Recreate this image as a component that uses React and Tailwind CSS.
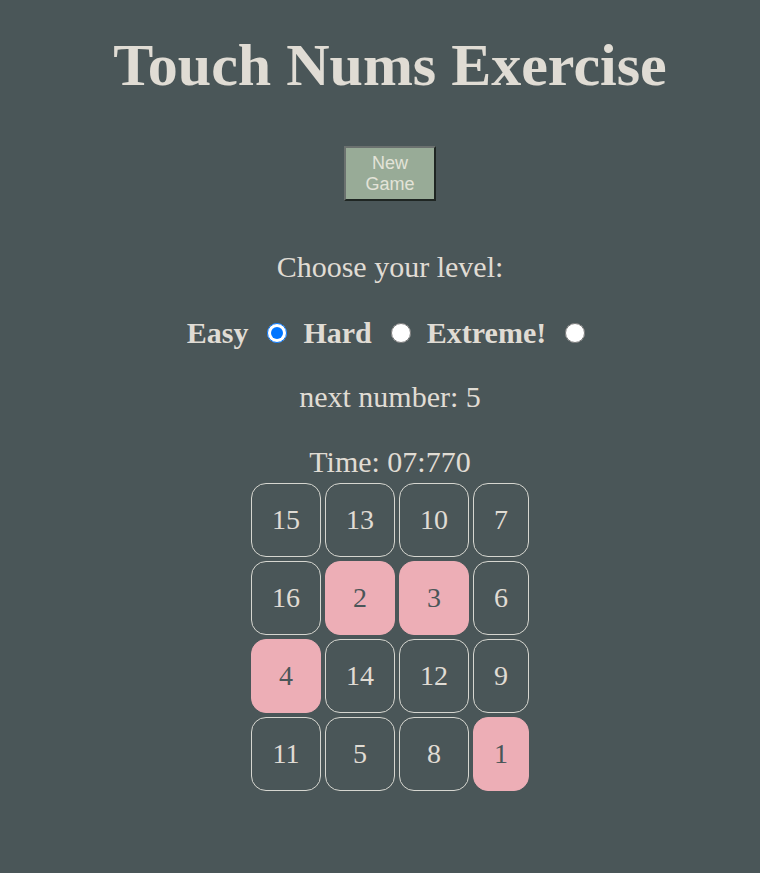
import { useState } from "react";

const BOARD = [
  [15, 13, 10, 7],
  [16, 2, 3, 6],
  [4, 14, 12, 9],
  [11, 5, 8, 1],
];

const LEVELS = ["Easy", "Hard", "Extreme!"];

export default function App() {
  const [level, setLevel] = useState("Easy");
  const next = 5;

  return (
    <div
      className="min-h-screen bg-[#4a5658] pl-[20px] text-center text-[#e0dcd4]"
      style={{ fontFamily: '"Liberation Serif", "Times New Roman", serif' }}
    >
      <h1 className="pt-[31px] text-[60px] font-bold leading-[68px]">Touch Nums Exercise</h1>

      <div className="mt-[47px] flex justify-center">
        <button
          className="h-[55px] w-[92px] border-2 border-t-[#6b716f] border-l-[#6b716f] border-b-[#1f2623] border-r-[#1f2623] bg-[#98ab97] px-[14px] text-[18px] leading-[21px] text-[#e3e3d8]"
          style={{ fontFamily: '"Liberation Sans", Arial, sans-serif' }}
        >
          New Game
        </button>
      </div>

      <p className="mt-[49px] text-[30px] leading-[34px]">Choose your level:</p>

      <div className="mt-[32px] flex items-center justify-center pr-[8px] text-[30px] font-bold leading-[34px]">
        {LEVELS.map((l, i) => (
          <label key={l} className={"flex items-center " + (i > 0 ? "ml-[16px]" : "")}>
            {l}
            <input
              type="radio"
              name="level"
              checked={level === l}
              onChange={() => setLevel(l)}
              className="m-0 ml-[19px] h-5 w-5"
            />
          </label>
        ))}
      </div>

      <p className="mt-[30px] text-[30px] leading-[34px]">next number: {next}</p>
      <p className="mt-[31px] text-[30px] leading-[34px]">Time: 07:770</p>

      <table className="mx-auto border-separate border-spacing-1">
        <tbody>
          {BOARD.map((row, r) => (
            <tr key={r}>
              {row.map((n) => {
                const done = n < next;
                return (
                  <td
                    key={n}
                    className={
                      "rounded-[15px] border p-5 text-[28px] leading-[32px] " +
                      (done
                        ? "border-[#edaeb6] bg-[#edaeb6] text-[#4a5658]"
                        : "border-[#d6d6d0] text-[#e0dcd4]")
                    }
                  >
                    {n}
                  </td>
                );
              })}
            </tr>
          ))}
        </tbody>
      </table>
    </div>
  );
}
